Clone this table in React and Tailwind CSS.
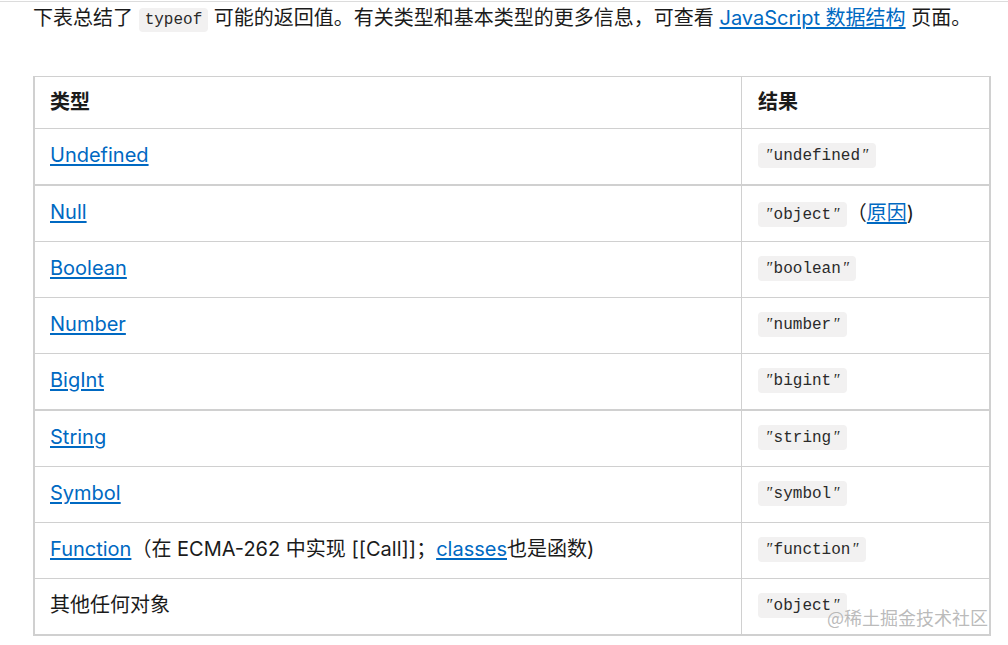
import React from "react";

const body = { fontFamily: "Inter, 'Noto Sans CJK SC', sans-serif" };

function Q() {
  return (
    <span
      className="inline-block w-[9.6px] text-center italic"
      style={{ fontFamily: "'Liberation Serif', 'DejaVu Serif', serif" }}
    >
      ″
    </span>
  );
}

function Code({ children, q = false }) {
  return (
    <code
      className="inline-block rounded-[4px] bg-[#f2f1f1] px-[6px] text-[16px] leading-[24px] text-[#2a2a2a] align-middle"
      style={{ fontFamily: "'Liberation Mono', 'DejaVu Sans Mono', monospace" }}
    >
      {q && <Q />}
      {children}
      {q && <Q />}
    </code>
  );
}

function A({ children }) {
  return <a className="text-[#0069c2] underline underline-offset-[2px] decoration-[1.5px]">{children}</a>;
}

const rows = [
  { left: <A>Undefined</A>, right: <Code q>undefined</Code>, b: "border-b-2" },
  {
    left: <A>Null</A>,
    right: (
      <span>
        <Code q>object</Code>（<A>原因</A>)
      </span>
    ),
    b: "border-b",
  },
  { left: <A>Boolean</A>, right: <Code q>boolean</Code>, b: "border-b" },
  { left: <A>Number</A>, right: <Code q>number</Code>, b: "border-b" },
  { left: <A>BigInt</A>, right: <Code q>bigint</Code>, b: "border-b-2" },
  { left: <A>String</A>, right: <Code q>string</Code>, b: "border-b" },
  { left: <A>Symbol</A>, right: <Code q>symbol</Code>, b: "border-b" },
  {
    left: (
      <span>
        <A>Function</A>（在 ECMA-262 中实现 [[Call]]；<A>classes</A>也是函数)
      </span>
    ),
    right: <Code q>function</Code>,
    b: "border-b",
  },
  { left: <span>其他任何对象</span>, right: <Code q>object</Code>, b: "border-b-2" },
];

export default function App() {
  return (
    <div className="min-h-[645px] w-[1008px] bg-white text-[#1b1b1b]" style={body}>
      <div className="pt-px">
        <div className="h-px bg-[#dcdcdc]" />
      </div>
      <div className="px-[33px]">
        <p className="text-[20px] leading-[32px] whitespace-nowrap">
          下表总结了 <Code>typeof</Code> 可能的返回值。有关类型和基本类型的更多信息，可查看 <A>JavaScript 数据结构</A> 页面。
        </p>
        <div className="relative mt-[42px] w-[958px] border-x-2 border-t border-[#d0d0d0] text-[20px]">
          <div className="flex h-[52px] border-b border-[#d0d0d0] font-bold">
            <div className="flex w-[706px] items-center pl-[15px] pb-[2px]">类型</div>
            <div className="flex flex-1 items-center border-l border-[#d0d0d0] pl-4 pb-[2px]">结果</div>
          </div>
          {rows.map((r, i) => (
            <div key={i} className={`flex h-[55px] box-content border-[#d0d0d0] ${r.b}`}>
              <div className="flex w-[706px] items-center pl-[15px] pb-[3px] whitespace-nowrap">{r.left}</div>
              <div className="flex flex-1 items-center border-l border-[#d0d0d0] pl-4 pb-[2px] whitespace-nowrap">{r.right}</div>
            </div>
          ))}
          <div
            className="absolute right-[1px] bottom-[8px] text-[18px] leading-[22px] text-[#a9a9a9]/80"
            style={{ fontFamily: "'Noto Sans CJK SC', sans-serif" }}
          >
            @稀土掘金技术社区
          </div>
        </div>
      </div>
    </div>
  );
}
